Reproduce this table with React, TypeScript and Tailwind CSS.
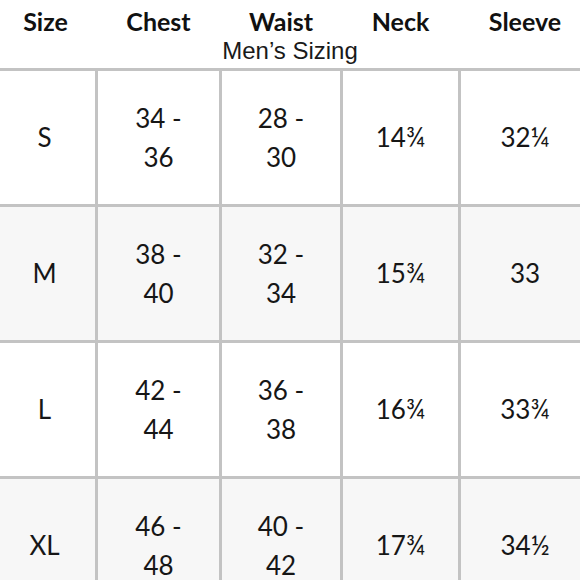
import React from "react";

type Row = {
  size: string;
  chest: [string, string];
  waist: [string, string];
  neck: string;
  sleeve: string;
};

const ROWS: Row[] = [
  { size: "S", chest: ["34 -", "36"], waist: ["28 -", "30"], neck: "14¾", sleeve: "32¼" },
  { size: "M", chest: ["38 -", "40"], waist: ["32 -", "34"], neck: "15¾", sleeve: "33" },
  { size: "L", chest: ["42 -", "44"], waist: ["36 -", "38"], neck: "16¾", sleeve: "33¾" },
  { size: "XL", chest: ["46 -", "48"], waist: ["40 -", "42"], neck: "17¾", sleeve: "34½" },
];

const HEADERS = ["Size", "Chest", "Waist", "Neck", "Sleeve"];

// column widths shared by header and body so labels sit over their cells
const COLS = "grid-cols-[95px_121px_118px_115px_1fr]";

function Cell({
  striped,
  first = false,
  children,
}: {
  striped: boolean;
  first?: boolean;
  children: React.ReactNode;
}) {
  return (
    <div
      className={`flex h-[133px] flex-col items-center justify-center text-[26px] leading-[39px] text-[#161616] ${
        striped ? "bg-[#f7f7f7]" : "bg-white"
      } ${first ? "pr-[6px]" : ""}`}
    >
      {children}
    </div>
  );
}

export default function App() {
  return (
    <div className="h-[580px] w-[580px] overflow-hidden bg-white font-['Lato',sans-serif]">
      <div className="w-[589px]">
        {/* Header */}
        <div className="flex h-[68px] flex-col">
          <div className={`grid ${COLS} gap-x-[3px] pt-[6px]`}>
            {HEADERS.map((h, i) => (
              <div
                key={h}
                className={`text-center text-[25px] font-bold leading-[30px] text-[#111] ${i === 0 ? "pr-[4px]" : ""}`}
              >
                {h}
              </div>
            ))}
          </div>
          <div className="mt-[2px] pr-[9px] text-center font-['Liberation_Sans',Arial,sans-serif] text-[24px] leading-[26px] text-[#1a1a1a]">
            Men’s Sizing
          </div>
        </div>

        {/* Table body: grey background shows through the gaps as grid lines */}
        <div className={`grid ${COLS} gap-[3px] bg-[#c3c3c3] pt-[3px]`}>
          {ROWS.map((r, i) => {
            const striped = i % 2 === 1;
            return (
              <React.Fragment key={r.size}>
                <Cell striped={striped} first>
                  {r.size}
                </Cell>
                <Cell striped={striped}>
                  <span>{r.chest[0]}</span>
                  <span>{r.chest[1]}</span>
                </Cell>
                <Cell striped={striped}>
                  <span>{r.waist[0]}</span>
                  <span>{r.waist[1]}</span>
                </Cell>
                <Cell striped={striped}>{r.neck}</Cell>
                <Cell striped={striped}>{r.sleeve}</Cell>
              </React.Fragment>
            );
          })}
        </div>
      </div>
    </div>
  );
}
